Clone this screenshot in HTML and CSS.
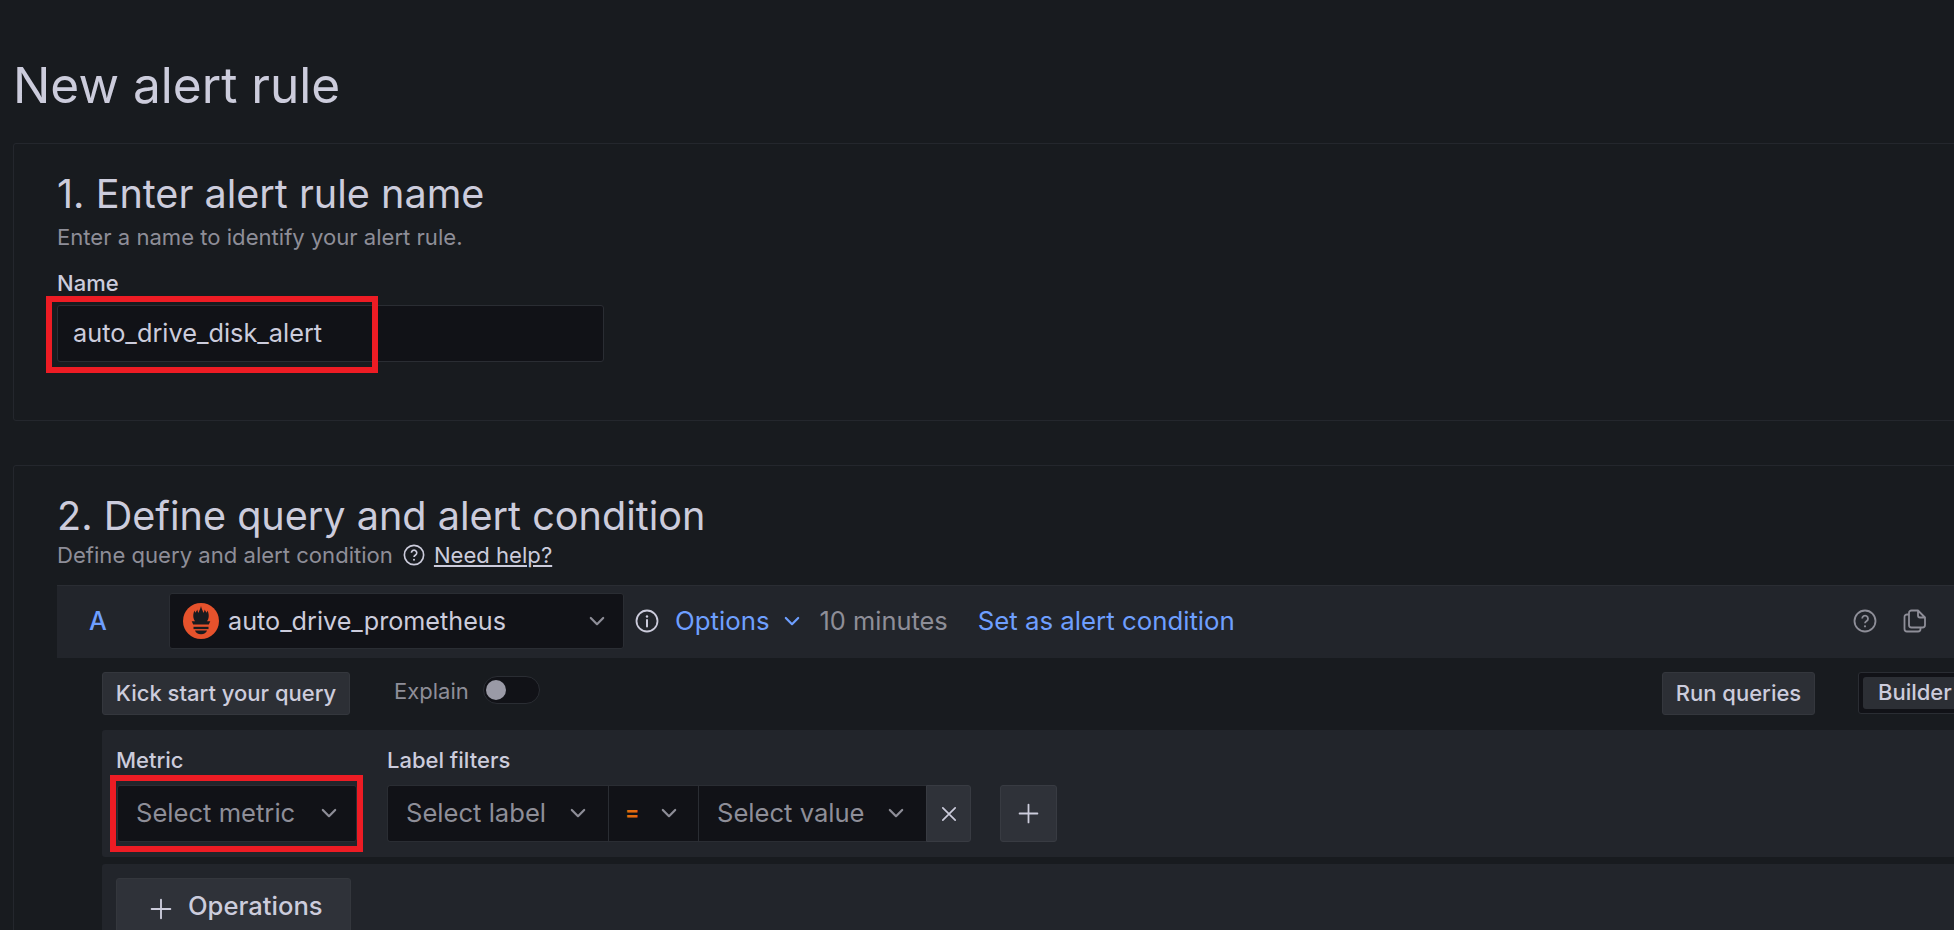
FILE: index.html
```html
<!DOCTYPE html>
<html lang="en">
<head>
<meta charset="utf-8">
<title>New alert rule</title>
<link rel="stylesheet" href="styles.css">
</head>
<body>
<svg class="defs" width="0" height="0" aria-hidden="true">
  <symbol id="chev" viewBox="0 0 16 16"><path d="M3.5 5.8 8 10.3l4.500-4.500" fill="none" stroke="currentColor" stroke-width="1.600" stroke-linecap="round" stroke-linejoin="round"/></symbol>
  <symbol id="help" viewBox="0 0 24 24"><circle cx="12" cy="12" r="10.500" fill="none" stroke="currentColor" stroke-width="1.800"/><path d="M9.200 9.600a2.900 2.900 0 1 1 4.500 2.400c-1 .7-1.700 1.200-1.700 2.300" fill="none" stroke="currentColor" stroke-width="1.800"/><circle cx="12" cy="17.300" r="1.100" fill="currentColor"/></symbol>
</svg>
<main class="page">
  <h1 class="title">New alert rule</h1>

  <section class="card card-name">
    <h2 class="heading">1. Enter alert rule name</h2>
    <p class="sub">Enter a name to identify your alert rule.</p>
    <div class="field-label name-label">Name</div>
    <div class="name-input">
      <span>auto_drive_disk_alert</span>
      <i class="mark mark-name"></i>
    </div>
  </section>

  <section class="card card-query">
    <h2 class="heading">2. Define query and alert condition</h2>
    <p class="sub sub-help">Define query and alert condition
      <svg class="ic-help-small"><use href="#help"/></svg>
      <a class="help-link">Need help?</a>
    </p>

    <div class="query">
      <header class="query-head">
        <span class="ref">A</span>
        <div class="ds-select">
          <svg class="prom" viewBox="0 0 36 36">
            <circle cx="18" cy="18" r="18" fill="#e6522c"/>
            <path fill="#181b1f" d="M18 3c.5 3 1.800 4.300 2.300 6.800.9-1 1.300-2 1.200-3.400 1 1.300 1.600 2 1.800 3.400.6-.7 1-1.300 1.200-2.400 1.300 2.600 1.500 5.200 1 7.600-.3 1.300-.8 2.200-1.500 3.300h3.300l-1.500 3.200H10.200L8.700 18.300H12c-.7-1.100-1.200-2-1.500-3.300-.5-2.400-.3-5 1-7.600.2 1.100.6 1.700 1.200 2.400.2-1.400.8-2.100 1.800-3.400-.1 1.400.3 2.400 1.200 3.400C16.200 7.300 17.500 6 18 3z"/>
            <rect x="10.500" y="23.800" width="15" height="2.300" fill="#181b1f"/>
            <path fill="#181b1f" d="M12 27.400h12c-.6 2.300-3 3.900-6 3.900s-5.400-1.600-6-3.900z"/>
          </svg>
          <span class="ds-name">auto_drive_prometheus</span>
          <svg class="chev ds-chev"><use href="#chev"/></svg>
        </div>
        <svg class="ic-info" viewBox="0 0 24 24"><circle cx="12" cy="12" r="10.500" fill="none" stroke="currentColor" stroke-width="1.800"/><circle cx="12" cy="7.500" r="1.200" fill="currentColor"/><path d="M12 11v6.500" stroke="currentColor" stroke-width="2" stroke-linecap="round"/></svg>
        <span class="link-blue options">Options</span>
        <svg class="chev opt-chev"><use href="#chev"/></svg>
        <span class="muted minutes">10 minutes</span>
        <span class="link-blue set-cond">Set as alert condition</span>
        <svg class="ic-head ic-q"><use href="#help"/></svg>
        <svg class="ic-head ic-copy" viewBox="0 0 24 24"><path d="M15 1.500H8.500A2.500 2.500 0 0 0 6 4v12a2.500 2.500 0 0 0 2.500 2.500h11A2.500 2.500 0 0 0 22 16V8.500zM15 1.500v5a2 2 0 0 0 2 2h5M6 5.500H4A2.500 2.500 0 0 0 1.500 8v12A2.500 2.500 0 0 0 4 22.500h11a2.500 2.500 0 0 0 2.500-2.500v-1.500" fill="none" stroke="currentColor" stroke-width="1.800" stroke-linejoin="round"/></svg>
      </header>

      <div class="query-body">
        <div class="toolbar">
          <button class="btn btn-sm kick">Kick start your query</button>
          <span class="muted-s explain">Explain</span>
          <span class="switch"><i class="knob"></i></span>
          <button class="btn btn-sm run">Run queries</button>
          <div class="radio"><span class="radio-on">Builder</span></div>
        </div>

        <div class="panel panel-metric">
          <div class="metric-field">
            <div class="field-label">Metric</div>
            <div class="select metric-select">
              <span class="ph">Select metric</span>
              <svg class="chev"><use href="#chev"/></svg>
              <i class="mark mark-metric"></i>
            </div>
          </div>
          <div class="label-field">
            <div class="field-label">Label filters</div>
            <div class="filters">
              <div class="seg seg-label"><span class="ph">Select label</span><svg class="chev"><use href="#chev"/></svg></div>
              <div class="seg seg-op"><span class="op">=</span><svg class="chev"><use href="#chev"/></svg></div>
              <div class="seg seg-value"><span class="ph">Select value</span><svg class="chev"><use href="#chev"/></svg></div>
              <button class="seg-x"><svg viewBox="0 0 16 16"><path d="M2.500 2.500l11 11M13.500 2.500l-11 11" stroke="currentColor" stroke-width="1.500" stroke-linecap="round"/></svg></button>
              <button class="add"><svg viewBox="0 0 20 20"><path d="M10 1.500v17M1.500 10h17" stroke="currentColor" stroke-width="1.700" stroke-linecap="round"/></svg></button>
            </div>
          </div>
        </div>

        <div class="panel panel-ops">
          <button class="btn btn-ops"><svg viewBox="0 0 20 20"><path d="M10 1.500v17M1.500 10h17" stroke="currentColor" stroke-width="1.700" stroke-linecap="round"/></svg>Operations</button>
        </div>
      </div>
    </div>
  </section>
</main>
</body>
</html>
```

FILE: styles.css
```css
* { box-sizing: border-box; }
html, body { margin: 0; height: 100%; background: #181b1f; }
body { overflow: hidden; font-family: Inter, "Noto Sans", sans-serif; color: #ccccdc; }
.defs { position: absolute; }
.page { width: 2200px; height: 930px; padding: 55px 0 0 13px; overflow: hidden; }
.title { margin: 0 0 28px 0; font-size: 49.600px; line-height: 60px; font-weight: 400; color: #ccccdc; }

.card { border: 1px solid #24272d; border-radius: 3px; padding: 27px 0 0 43px; }
.card-name { height: 278px; margin-bottom: 44px; }
.card-query { height: 600px; }
.heading { margin: 0; font-size: 39.600px; line-height: 46px; font-weight: 400; color: #ccccdc; }
.sub { margin: 7px 0 0; font-size: 22.100px; line-height: 26px; color: #8e8e98; }
.sub-help { margin-top: 3px; display: flex; align-items: center; }
.ic-help-small { width: 22px; height: 22px; margin: 0 9px 0 10px; color: #ccccdc; }
.help-link { color: #ccccdc; text-decoration: underline; }
.field-label { font-size: 22px; line-height: 26px; font-weight: 500; color: #ccccdc; }
.name-label { margin: 20px 0 9px; }
.name-input { position: relative; width: 547px; height: 57px; background: #111217; border: 1px solid #2a2d33; border-radius: 3px; display: flex; align-items: center; padding: 0 0 2px 15px; font-size: 25.300px; color: #ccccdc; }

.mark { position: absolute; border: 6px solid #ed1c24; pointer-events: none; }
.mark-name { left: -12px; top: -10px; width: 332px; height: 77px; }
.mark-metric { left: -8px; top: -11px; width: 253px; height: 77px; }

.query { margin-top: 17px; }
.query-head { height: 73px; padding-bottom: 3px; background: #22252b; border-top: 1px solid #2a2d33; display: flex; align-items: center; font-size: 25.200px; }
.ref { width: 112px; padding-left: 32px; color: #6e9fff; font-weight: 500; }
.ds-select { width: 455px; height: 56px; background: #111217; border: 1px solid #2a2d33; border-radius: 3px; display: flex; align-items: center; padding-left: 13px; color: #ccccdc; }
.prom { width: 36px; height: 36px; flex: none; }
.ds-name { margin-left: 9px; }
.chev { width: 22px; height: 22px; flex: none; color: #8e8e98; }
.ds-chev { margin-left: auto; margin-right: 15px; }
.ic-info { width: 24px; height: 24px; margin-left: 11px; color: #ccccdc; }
.link-blue { color: #6e9fff; font-size: 25.800px; }
.options { margin-left: 16px; }
.opt-chev { margin-left: 11px; color: #6e9fff; }
.minutes { margin-left: 17px; font-size: 25.400px; }
.muted { color: #8e8e98; }
.set-cond { margin-left: 30px; }
.ic-head { width: 24px; height: 24px; color: #8e8e98; }
.ic-q { margin-left: 618px; }
.ic-copy { margin-left: 26px; }

.query-body { padding: 14px 0 0 45px; }
.toolbar { display: flex; align-items: flex-start; height: 43px; margin-bottom: 15px; }
.btn { font-family: inherit; color: #ccccdc; background: #2c2f35; border: 1px solid #34373d; border-radius: 3px; font-weight: 500; }
.btn-sm { height: 43px; padding: 0 0 2px; font-size: 22px; white-space: nowrap; }
.kick { width: 248px; }
.explain { margin: 0 0 0 44px; line-height: 38px; }
.muted-s { font-size: 22px; color: #8e8e98; }
.switch { position: relative; width: 57px; height: 28px; margin: 4px 0 0 14px; background: #111217; border: 1px solid #2a2d33; border-radius: 14px; }
.knob { position: absolute; left: 2px; top: 3px; width: 20px; height: 20px; border-radius: 50%; background: #9a9aa6; }
.run { margin-left: auto; width: 153px; }
.radio { margin: 0 101px 0 43px; height: 42px; width: 240px; padding: 4px; border: 1px solid #2a2d33; border-radius: 3px; background: #111217; }
.radio-on { display: block; height: 32px; line-height: 30px; padding-left: 15px; width: 110px; background: #2c2f35; border-radius: 3px; font-size: 22px; font-weight: 500; }

.panel { background: #22252b; border-radius: 3px; }
.panel-metric { display: flex; gap: 30px; height: 127px; padding: 17px 0 0 14px; margin-bottom: 7px; }
.panel-ops { padding: 14px; height: 200px; }
.metric-field .field-label, .label-field .field-label { margin-bottom: 12px; }
.select, .seg { display: flex; align-items: center; height: 57px; padding-bottom: 2px; background: #111217; font-size: 25.600px; }
.ph { color: #8e8e98; }
.metric-select { position: relative; margin-left: 1px; width: 240px; padding: 0 16px 2px 18px; justify-content: space-between; border: 1px solid #2a2d33; border-radius: 3px; }
.filters { display: flex; }
.seg { justify-content: space-between; border: 1px solid #2a2d33; border-right-width: 0; }
.seg-label { width: 221px; padding: 0 19px 2px 18px; border-radius: 3px 0 0 3px; }
.seg-op { width: 90px; padding: 0 18px 2px 16px; }
.seg-value { width: 228px; padding: 0 19px 2px 18px; }
.op { color: #e36a0e; font-weight: 700; font-size: 21px; }
.seg-x, .add { padding: 0; display: flex; align-items: center; justify-content: center; height: 57px; background: #2f3239; border: 1px solid #383b42; color: #ccccdc; }
.seg-x { width: 45px; border-radius: 0 3px 3px 0; }
.seg-x svg { width: 18px; height: 18px; }
.add { width: 57px; margin-left: 29px; border-radius: 3px; }
.add svg { width: 21px; height: 21px; }
.btn-ops { width: 235px; height: 80px; display: flex; align-items: flex-start; padding: 11px 0 0 33px; gap: 16px; font-size: 25.600px; background: #2f3239; }
.btn-ops svg { width: 22px; height: 22px; margin-top: 8px; }
```
